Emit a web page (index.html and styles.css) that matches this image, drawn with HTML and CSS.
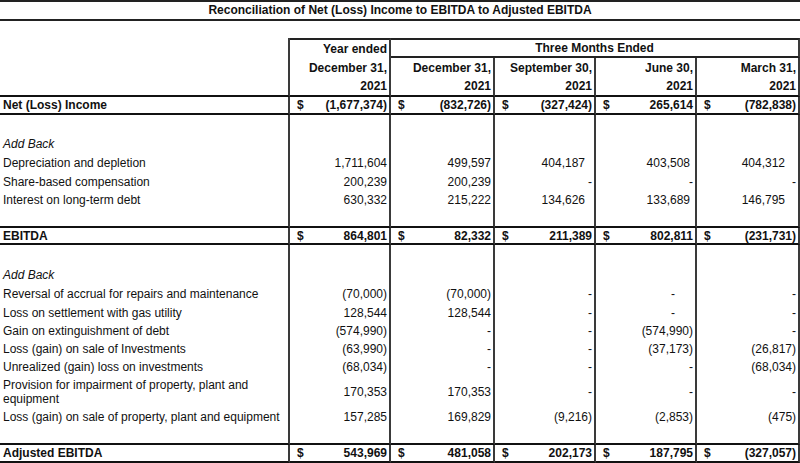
FILE: index.html
```html
<!DOCTYPE html>
<html>
<head>
<meta charset="utf-8">
<link rel="stylesheet" href="styles.css">
</head>
<body>
<div class="page">
  <div class="title">Reconciliation of Net (Loss) Income to EBITDA to Adjusted EBITDA</div>
  <table class="recon">
    <colgroup>
      <col class="c-label"><col class="c-year"><col class="c-q1"><col class="c-q2"><col class="c-q3"><col class="c-q4">
    </colgroup>
    <thead>
      <tr class="h1">
        <th class="lbl"></th>
        <th class="num top">Year ended</th>
        <th class="center top tm" colspan="4">Three Months Ended</th>
      </tr>
      <tr class="h2">
        <th class="lbl"></th>
        <th class="num">December 31,</th>
        <th class="num">December 31,</th>
        <th class="num">September 30,</th>
        <th class="num">June 30,</th>
        <th class="num">March 31,</th>
      </tr>
      <tr class="h3 rule">
        <th class="lbl"></th>
        <th class="num">2021</th>
        <th class="num">2021</th>
        <th class="num">2021</th>
        <th class="num">2021</th>
        <th class="num">2021</th>
      </tr>
    </thead>
    <tbody>
      <tr class="total rule r18">
        <td class="lbl">Net (Loss) Income</td>
        <td class="num"><div class="money"><span>$</span><span>(1,677,374)</span></div></td>
        <td class="num"><div class="money"><span>$</span><span>(832,726)</span></div></td>
        <td class="num"><div class="money"><span>$</span><span>(327,424)</span></div></td>
        <td class="num"><div class="money"><span>$</span><span>265,614</span></div></td>
        <td class="num"><div class="money"><span>$</span><span>(782,838)</span></div></td>
      </tr>
      <tr class="r20"><td class="lbl"></td><td class="num"></td><td class="num"></td><td class="num"></td><td class="num"></td><td class="num"></td></tr>
      <tr class="r18">
        <td class="lbl italic">Add Back</td>
        <td class="num"></td><td class="num"></td><td class="num"></td><td class="num"></td><td class="num"></td>
      </tr>
      <tr class="r19">
        <td class="lbl">Depreciation and depletion</td>
        <td class="num">1,711,604</td>
        <td class="num">499,597</td>
        <td class="num p3">404,187</td>
        <td class="num p4">403,508</td>
        <td class="num p5">404,312</td>
      </tr>
      <tr class="r19">
        <td class="lbl">Share-based compensation</td>
        <td class="num">200,239</td>
        <td class="num">200,239</td>
        <td class="num">-</td>
        <td class="num">-</td>
        <td class="num">-</td>
      </tr>
      <tr class="r18">
        <td class="lbl">Interest on long-term debt</td>
        <td class="num">630,332</td>
        <td class="num">215,222</td>
        <td class="num p3">134,626</td>
        <td class="num p4">133,689</td>
        <td class="num p5">146,795</td>
      </tr>
      <tr class="r19 rule"><td class="lbl"></td><td class="num"></td><td class="num"></td><td class="num"></td><td class="num"></td><td class="num"></td></tr>
      <tr class="total rule r17">
        <td class="lbl">EBITDA</td>
        <td class="num"><div class="money"><span>$</span><span>864,801</span></div></td>
        <td class="num"><div class="money"><span>$</span><span>82,332</span></div></td>
        <td class="num"><div class="money"><span>$</span><span>211,389</span></div></td>
        <td class="num"><div class="money"><span>$</span><span>802,811</span></div></td>
        <td class="num"><div class="money"><span>$</span><span>(231,731)</span></div></td>
      </tr>
      <tr class="r21"><td class="lbl"></td><td class="num"></td><td class="num"></td><td class="num"></td><td class="num"></td><td class="num"></td></tr>
      <tr class="r18">
        <td class="lbl italic">Add Back</td>
        <td class="num"></td><td class="num"></td><td class="num"></td><td class="num"></td><td class="num"></td>
      </tr>
      <tr class="r19">
        <td class="lbl">Reversal of accrual for repairs and maintenance</td>
        <td class="num">(70,000)</td>
        <td class="num">(70,000)</td>
        <td class="num">-</td>
        <td class="num mid">-</td>
        <td class="num">-</td>
      </tr>
      <tr class="r19">
        <td class="lbl">Loss on settlement with gas utility</td>
        <td class="num">128,544</td>
        <td class="num">128,544</td>
        <td class="num">-</td>
        <td class="num mid">-</td>
        <td class="num">-</td>
      </tr>
      <tr class="r18">
        <td class="lbl">Gain on extinguishment of debt</td>
        <td class="num">(574,990)</td>
        <td class="num">-</td>
        <td class="num">-</td>
        <td class="num">(574,990)</td>
        <td class="num">-</td>
      </tr>
      <tr class="r18">
        <td class="lbl">Loss (gain) on sale of Investments</td>
        <td class="num">(63,990)</td>
        <td class="num">-</td>
        <td class="num">-</td>
        <td class="num">(37,173)</td>
        <td class="num">(26,817)</td>
      </tr>
      <tr class="r18">
        <td class="lbl">Unrealized (gain) loss on investments</td>
        <td class="num">(68,034)</td>
        <td class="num">-</td>
        <td class="num">-</td>
        <td class="num">-</td>
        <td class="num">(68,034)</td>
      </tr>
      <tr class="r32">
        <td class="lbl wrap">Provision for impairment of property, plant and equipment</td>
        <td class="num">170,353</td>
        <td class="num">170,353</td>
        <td class="num">-</td>
        <td class="num">-</td>
        <td class="num">-</td>
      </tr>
      <tr class="r18">
        <td class="lbl">Loss (gain) on sale of property, plant and equipment</td>
        <td class="num">157,285</td>
        <td class="num">169,829</td>
        <td class="num">(9,216)</td>
        <td class="num">(2,853)</td>
        <td class="num">(475)</td>
      </tr>
      <tr class="r19 rule"><td class="lbl"></td><td class="num"></td><td class="num"></td><td class="num"></td><td class="num"></td><td class="num"></td></tr>
      <tr class="total rule r18">
        <td class="lbl">Adjusted EBITDA</td>
        <td class="num"><div class="money"><span>$</span><span>543,969</span></div></td>
        <td class="num"><div class="money"><span>$</span><span>481,058</span></div></td>
        <td class="num"><div class="money"><span>$</span><span>202,173</span></div></td>
        <td class="num"><div class="money"><span>$</span><span>187,795</span></div></td>
        <td class="num"><div class="money"><span>$</span><span>(327,057)</span></div></td>
      </tr>
    </tbody>
  </table>
</div>
</body>
</html>
```
FILE: styles.css
```css
html, body {
  margin: 0;
  padding: 0;
  background: #ffffff;
}

body {
  font-family: "Liberation Sans", Arial, sans-serif;
  font-size: 12px;
  color: #111;
}

.page {
  width: 800px;
}

.title {
  box-sizing: border-box;
  height: 21px;
  border-top: 2px solid #222;
  border-bottom: 2px solid #222;
  font-weight: bold;
  text-align: center;
  line-height: 17px;
  margin-bottom: 17px;
}

.recon {
  width: 800px;
  table-layout: fixed;
  border-collapse: separate;
  border-spacing: 0;
}

.c-label { width: 290px; }
.c-year { width: 101px; }
.c-q1 { width: 104px; }
.c-q2 { width: 101px; }
.c-q3 { width: 101px; }
.c-q4 { width: 103px; }

.recon th,
.recon td {
  padding: 0;
  line-height: 14px;
  vertical-align: middle;
  white-space: nowrap;
  overflow: hidden;
}

.recon th {
  font-weight: bold;
}

.recon .lbl {
  text-align: left;
  padding-left: 3px;
  border-right: 2px solid #3a3a3a;
}

.recon .num {
  text-align: right;
  padding-right: 2px;
  border-right: 2px solid #3a3a3a;
}

.recon .center {
  text-align: center;
  border-right: 2px solid #3a3a3a;
  border-bottom: 2px solid #222;
}

.recon .top {
  border-top: 2px solid #222;
}

.recon .wrap {
  white-space: normal;
}

.italic {
  font-style: italic;
}

.total td {
  font-weight: bold;
}

.rule th,
.rule td {
  border-bottom: 2px solid #111;
}

.money {
  display: flex;
  justify-content: space-between;
  padding-left: 7px;
}

.p3 { padding-right: 9px !important; }
.p4 { padding-right: 5px !important; }
.p5 { padding-right: 13px !important; }
.mid { padding-right: 20px !important; }

.h1 { height: 20px; }
.h2 { height: 19px; }
.h3 { height: 20px; }
.r17 { height: 17px; }
.r18 { height: 18px; }
.r19 { height: 19px; }
.r20 { height: 20px; }
.r21 { height: 21px; }
.r32 { height: 32px; }
```
